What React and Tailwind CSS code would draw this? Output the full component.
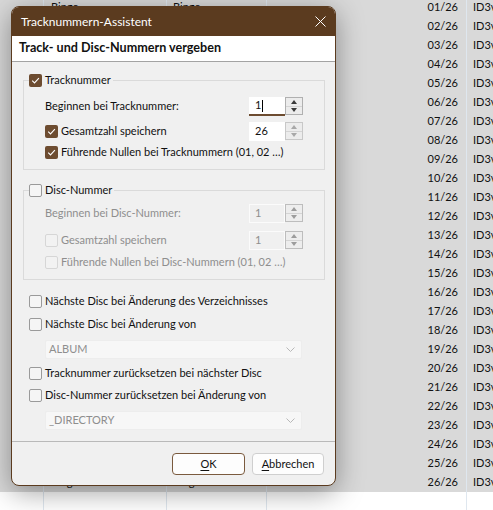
import React from "react";

const rows = Array.from({ length: 26 }, (_, i) => String(i + 1).padStart(2, "0") + "/26");

function Check({ state = "off" }) {
  if (state === "on") {
    return (
      <span className="flex h-[13px] w-[13px] shrink-0 items-center justify-center rounded-[2px] bg-[#6d4c30]">
        <svg width="9" height="9" viewBox="0 0 9 9" fill="none">
          <path d="M1.2 4.6 L3.5 6.9 L7.9 2.2" stroke="white" strokeWidth="1.1" />
        </svg>
      </span>
    );
  }
  if (state === "dis") {
    return <span className="h-[13px] w-[13px] shrink-0 rounded-[2px] border border-[#d6d6d6] bg-[#f2f2f2]" />;
  }
  return <span className="h-[13px] w-[13px] shrink-0 rounded-[2px] border border-[#9a9a9a] bg-[#f5f5f5]" />;
}

function CheckRow({ state, label, disabled }) {
  return (
    <div className="flex h-[18px] items-center gap-[3px]">
      <Check state={state} />
      <span className={disabled ? "text-[#8e8e8e]" : "text-[#111]"}>{label}</span>
    </div>
  );
}

function Arrows({ color, border, bg }) {
  return (
    <div className={`flex h-[18px] w-[18px] flex-col border ${border} ${bg}`}>
      <div className="flex flex-1 items-center justify-center border-b border-[#d4d4d4]">
        <svg width="6" height="4" viewBox="0 0 6 4"><path d="M0 4 L3 0 L6 4 Z" fill={color} /></svg>
      </div>
      <div className="flex flex-1 items-center justify-center">
        <svg width="6" height="4" viewBox="0 0 6 4"><path d="M0 0 L3 4 L6 0 Z" fill={color} /></svg>
      </div>
    </div>
  );
}

function Spin({ value, focused, disabled }) {
  if (disabled) {
    return (
      <div className="flex h-[19px] w-[54px] shrink-0 items-start">
        <div className="flex h-[19px] w-[36px] items-center border border-[#fbfbfb] bg-[#f0f0f0] pl-[5px] text-[#8e8e8e]">{value}</div>
        <Arrows color="#9c9c9c" border="border-[#bdbdbd]" bg="bg-[#ededed]" />
      </div>
    );
  }
  return (
    <div className="flex h-[19px] w-[54px] shrink-0 items-start">
      <div
        className={`flex h-[19px] w-[36px] items-center bg-white pl-[6px] text-[#111] ${
          focused ? "border-b-2 border-[#6d4c30]" : ""
        }`}
      >
        {value}
        {focused && <span className="ml-[1px] h-[12px] w-px bg-black" />}
      </div>
      <Arrows
        color={focused ? "#3a3a3a" : "#a8a8a8"}
        border={focused ? "border-[#b0b0b0]" : "border-[#c8c8c8]"}
        bg="bg-[#ececec]"
      />
    </div>
  );
}

function Combo({ value }) {
  return (
    <div className="ml-[22px] flex h-[19px] w-[257px] items-center justify-between rounded-[2px] border border-[#ededed] bg-[#f7f7f7] pl-[3px] pr-[6px] text-[#8e8e8e]">
      <span>{value}</span>
      <svg width="9" height="5" viewBox="0 0 9 5" fill="none">
        <path d="M0.5 0.5 L4.5 4.5 L8.5 0.5" stroke="#b8b8b8" strokeWidth="1" />
      </svg>
    </div>
  );
}

export default function App() {
  const edge = (i) => i === 0 || i === rows.length - 1;
  return (
    <div className="relative h-[510px] w-[493px] overflow-hidden bg-white font-['Lato',sans-serif] text-[11px] text-[#111]">
      {/* background list */}
      <div className="flex h-full">
        <div className="h-full w-[44px] shrink-0 border-r border-[#dfe7ef]">
          <div className="-mt-[2px]">
            {rows.map((r) => (
              <div key={r} className="h-[19px] bg-[#d9d9d9]" />
            ))}
          </div>
        </div>
        <div className="h-full w-[123px] shrink-0 border-r border-[#dfe7ef]">
          <div className="-mt-[2px]">
            {rows.map((r, i) => (
              <div key={r} className="flex h-[19px] items-center bg-[#d9d9d9] pl-[7px]">{edge(i) ? "Bingo" : ""}</div>
            ))}
          </div>
        </div>
        <div className="h-full w-[100px] shrink-0 border-r border-[#dfe7ef]">
          <div className="-mt-[2px]">
            {rows.map((r, i) => (
              <div key={r} className="flex h-[19px] items-center bg-[#d9d9d9] pl-[6px]">{edge(i) ? "Bingo" : ""}</div>
            ))}
          </div>
        </div>
        <div className="h-full w-[200px] shrink-0 border-r border-[#dfe7ef]">
          <div className="-mt-[2px]">
            {rows.map((r) => (
              <div key={r} className="flex h-[19px] items-center justify-end bg-[#d9d9d9] pr-[8px]">{r}</div>
            ))}
          </div>
        </div>
        <div className="h-full min-w-0 flex-1 overflow-hidden">
          <div className="-mt-[2px]">
            {rows.map((r) => (
              <div key={r} className="flex h-[19px] items-center overflow-hidden whitespace-nowrap bg-[#d9d9d9] pl-[6px]">ID3v2.3</div>
            ))}
          </div>
        </div>
      </div>

      {/* dialog */}
      <div className="absolute left-[11px] top-[6px] flex h-[480px] w-[325px] flex-col overflow-hidden rounded-[8px] border border-[#5b3b1f] bg-[#f0f0f0] shadow-[0_6px_28px_rgba(0,0,0,0.38)]">
        <div className="flex h-[29px] shrink-0 items-center justify-between bg-[#5b3b1f] pl-[9px] pr-[9px] text-[12px] text-white">
          <span>Tracknummern-Assistent</span>
          <svg width="11" height="11" viewBox="0 0 11 11" fill="none">
            <path d="M0.5 0.5 L10.5 10.5 M10.5 0.5 L0.5 10.5" stroke="white" strokeWidth="1" />
          </svg>
        </div>
        <div className="flex h-[26px] shrink-0 items-center border-b border-[#a3a3a3] bg-white pl-[7px] text-[12.6px] font-bold text-[#111]">
          Track- und Disc-Nummern vergeben
        </div>

        <div className="flex flex-col pb-[11px] pl-[11px] pr-[10px] pt-[11px]">
          <fieldset className="border border-[#dadada] px-[5px] pb-[8px]">
            <legend className="pr-[2px]">
              <span className="flex h-[14px] items-center gap-[3px]">
                <Check state="on" />
                <span>Tracknummer</span>
              </span>
            </legend>
            <div className="flex flex-col pl-[16px] pr-[16px] pt-[10px]">
              <div className="flex h-[19px] items-center justify-between">
                <span>Beginnen bei Tracknummer:</span>
                <Spin value="1" focused />
              </div>
              <div className="mt-[6px] flex h-[19px] items-center justify-between">
                <CheckRow state="on" label="Gesamtzahl speichern" />
                <Spin value="26" />
              </div>
              <div className="mt-[2px]">
                <CheckRow state="on" label="Führende Nullen bei Tracknummern (01, 02 …)" />
              </div>
            </div>
          </fieldset>

          <fieldset className="mt-[13px] border border-[#dadada] px-[5px] pb-[8px]">
            <legend className="pr-[2px]">
              <span className="flex h-[14px] items-center gap-[3px]">
                <Check state="off" />
                <span>Disc-Nummer</span>
              </span>
            </legend>
            <div className="flex flex-col pl-[16px] pr-[16px] pt-[7px]">
              <div className="flex h-[19px] items-center justify-between">
                <span className="text-[#8e8e8e]">Beginnen bei Disc-Nummer:</span>
                <Spin value="1" disabled />
              </div>
              <div className="mt-[8px] flex h-[19px] items-center justify-between">
                <CheckRow state="dis" label="Gesamtzahl speichern" disabled />
                <Spin value="1" disabled />
              </div>
              <div className="mt-[3px]">
                <CheckRow state="dis" label="Führende Nullen bei Disc-Nummern (01, 02 …)" disabled />
              </div>
            </div>
          </fieldset>

          <div className="ml-[6px] mt-[12px]">
            <CheckRow state="off" label="Nächste Disc bei Änderung des Verzeichnisses" />
          </div>
          <div className="ml-[6px] mt-[5px]">
            <CheckRow state="off" label="Nächste Disc bei Änderung von" />
          </div>
          <div className="mt-[7px]">
            <Combo value="ALBUM" />
          </div>
          <div className="ml-[6px] mt-[5px]">
            <CheckRow state="off" label="Tracknummer zurücksetzen bei nächster Disc" />
          </div>
          <div className="ml-[6px] mt-[4px]">
            <CheckRow state="off" label="Disc-Nummer zurücksetzen bei Änderung von" />
          </div>
          <div className="mt-[7px]">
            <Combo value="_DIRECTORY" />
          </div>
        </div>

        <div className="flex flex-1 items-start justify-end gap-[7px] border-t border-[#b9b9b9] pr-[11px] pt-[11px]">
          <button className="flex h-[22px] w-[73px] items-center justify-center rounded-[4px] border border-[#7a5a3e] bg-[#fdfdfd] text-[#111]">
            <span className="underline underline-offset-2">O</span>K
          </button>
          <button className="flex h-[22px] w-[72px] items-center justify-center rounded-[4px] border border-[#cfcfcf] bg-[#fdfdfd] text-[#111]">
            <span className="underline underline-offset-2">A</span>bbrechen
          </button>
        </div>
      </div>
    </div>
  );
}
